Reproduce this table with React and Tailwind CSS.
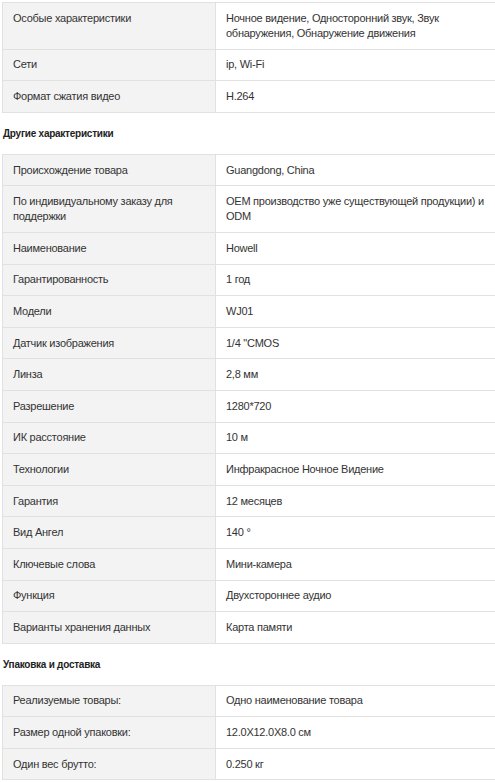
import React from 'react'

const main = [
  ['Особые характеристики', 'Ночное видение, Односторонний звук, Звук обнаружения, Обнаружение движения'],
  ['Сети', 'ip, Wi-Fi'],
  ['Формат сжатия видео', 'H.264'],
]

const other = [
  ['Происхождение товара', 'Guangdong, China'],
  ['По индивидуальному заказу для поддержки', 'OEM производство уже существующей продукции) и ODM'],
  ['Наименование', 'Howell'],
  ['Гарантированность', '1 год'],
  ['Модели', 'WJ01'],
  ['Датчик изображения', '1/4 "CMOS'],
  ['Линза', '2,8 мм'],
  ['Разрешение', '1280*720'],
  ['ИК расстояние', '10 м'],
  ['Технологии', 'Инфракрасное Ночное Видение'],
  ['Гарантия', '12 месяцев'],
  ['Вид Ангел', '140 °'],
  ['Ключевые слова', 'Мини-камера'],
  ['Функция', 'Двухстороннее аудио'],
  ['Варианты хранения данных', 'Карта памяти'],
]

const packing = [
  ['Реализуемые товары:', 'Одно наименование товара'],
  ['Размер одной упаковки:', '12.0X12.0X8.0 см'],
  ['Один вес брутто:', '0.250 кг'],
]

function SpecTable({ rows }) {
  return (
    <table className="w-[508px] min-w-[508px] border-collapse table-fixed">
      <tbody>
        {rows.map(([k, v]) => (
          <tr key={k}>
            <td className="w-[213px] border border-[#e1e1e1] bg-[#f3f3f3] pl-[10px] pr-[12px] py-[7.8px] align-top">{k}</td>
            <td className="border border-[#e1e1e1] pl-[10px] pr-[10px] py-[7.8px] align-top">{v}</td>
          </tr>
        ))}
      </tbody>
    </table>
  )
}

function Heading({ children }) {
  return <h3 className="mt-[13px] mb-[13px] pl-[1px] text-[10px] tracking-[-0.25px] font-bold leading-[15px] text-[#222]">{children}</h3>
}

export default function App() {
  return (
    <div
      className="w-[495px] h-[782px] overflow-hidden bg-white pt-[2px] pl-[2px] text-[11px] tracking-[-0.25px] leading-[15px] text-[#333]"
      style={{ fontFamily: '"Liberation Sans", Arial, sans-serif' }}
    >
      <SpecTable rows={main} />
      <Heading>Другие характеристики</Heading>
      <SpecTable rows={other} />
      <Heading>Упаковка и доставка</Heading>
      <SpecTable rows={packing} />
    </div>
  )
}
